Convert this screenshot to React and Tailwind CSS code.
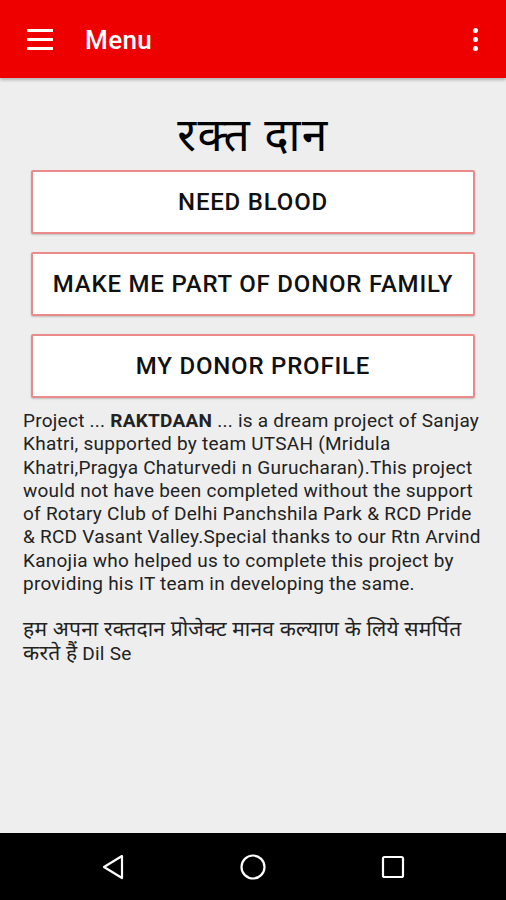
const buttons = ['NEED BLOOD', 'MAKE ME PART OF DONOR FAMILY', 'MY DONOR PROFILE'];

export default function App() {
  return (
    <div className="w-[506px] h-[900px] flex flex-col bg-[#eeeeee] overflow-hidden" style={{ fontFamily: 'Roboto, "Noto Sans", sans-serif' }}>
      <header className="h-[78px] shrink-0 bg-[#ee0000] flex items-center shadow-[0_2px_3px_rgba(0,0,0,0.25)] relative z-10">
        <div className="ml-[27px] w-[26px] flex flex-col gap-[6px]">
          <span className="h-[3px] bg-white" />
          <span className="h-[3px] bg-white" />
          <span className="h-[3px] bg-white" />
        </div>
        <h1 className="ml-[32px] mt-[3px] text-white text-[26px] font-medium tracking-[0.4px]">Menu</h1>
        <div className="ml-auto mr-[28px] flex flex-col gap-[4px] items-center">
          <span className="w-[5px] h-[5px] rounded-full bg-white" />
          <span className="w-[5px] h-[5px] rounded-full bg-white" />
          <span className="w-[5px] h-[5px] rounded-full bg-white" />
        </div>
      </header>

      <main className="flex-1 flex flex-col px-[23px]">
        <h2 className="mt-[30px] text-center text-[46px] leading-[50px] text-black tracking-[1.3px]" style={{ fontFamily: '"Noto Sans", "DejaVu Sans", sans-serif' }}>
          रक्त दान
        </h2>
        <div className="mt-[12px] mx-[8px] flex flex-col gap-[18px]">
          {buttons.map((b) => (
            <button
              key={b}
              className="h-[64px] bg-white border-2 border-[#ec8a8a] rounded-[2px] shadow-[0_1px_2px_rgba(0,0,0,0.2)] text-[24px] font-medium text-[#111] tracking-[0.8px]"
            >
              {b}
            </button>
          ))}
        </div>
        <p className="mt-[11px] text-[19px] leading-[23.3px] tracking-[0.25px] text-[#222]">
          Project ... <b className="font-bold">RAKTDAAN</b> ... is a dream project of Sanjay Khatri, supported by team UTSAH (Mridula Khatri,Pragya Chaturvedi n Gurucharan).This project would not have been completed without the support of Rotary Club of Delhi Panchshila Park &amp; RCD Pride &amp; RCD Vasant Valley.Special thanks to our Rtn Arvind Kanojia who helped us to complete this project by providing his IT team in developing the same.
        </p>
        <p className="mt-[23px] text-[19px] leading-[23.3px] tracking-[0.25px] text-[#222]">
          <span className="text-[21px]">हम अपना रक्तदान प्रोजेक्ट मानव कल्याण के लिये समर्पित करते हैं</span> Dil Se
        </p>
      </main>

      <nav className="h-[67px] shrink-0 bg-black flex items-center">
        <div className="w-[506px] flex justify-between px-[99px]">
          <svg width="28" height="28" viewBox="0 0 28 28" fill="none" stroke="white" strokeWidth="2.2" strokeLinejoin="round">
            <path d="M23 3 L5 14 L23 25 Z" />
          </svg>
          <svg width="28" height="28" viewBox="0 0 28 28" fill="none" stroke="white" strokeWidth="2.2">
            <circle cx="14" cy="14" r="11.5" />
          </svg>
          <svg width="28" height="28" viewBox="0 0 28 28" fill="none" stroke="white" strokeWidth="2.2">
            <rect x="4" y="4" width="20" height="20" rx="1.5" />
          </svg>
        </div>
      </nav>
    </div>
  );
}
